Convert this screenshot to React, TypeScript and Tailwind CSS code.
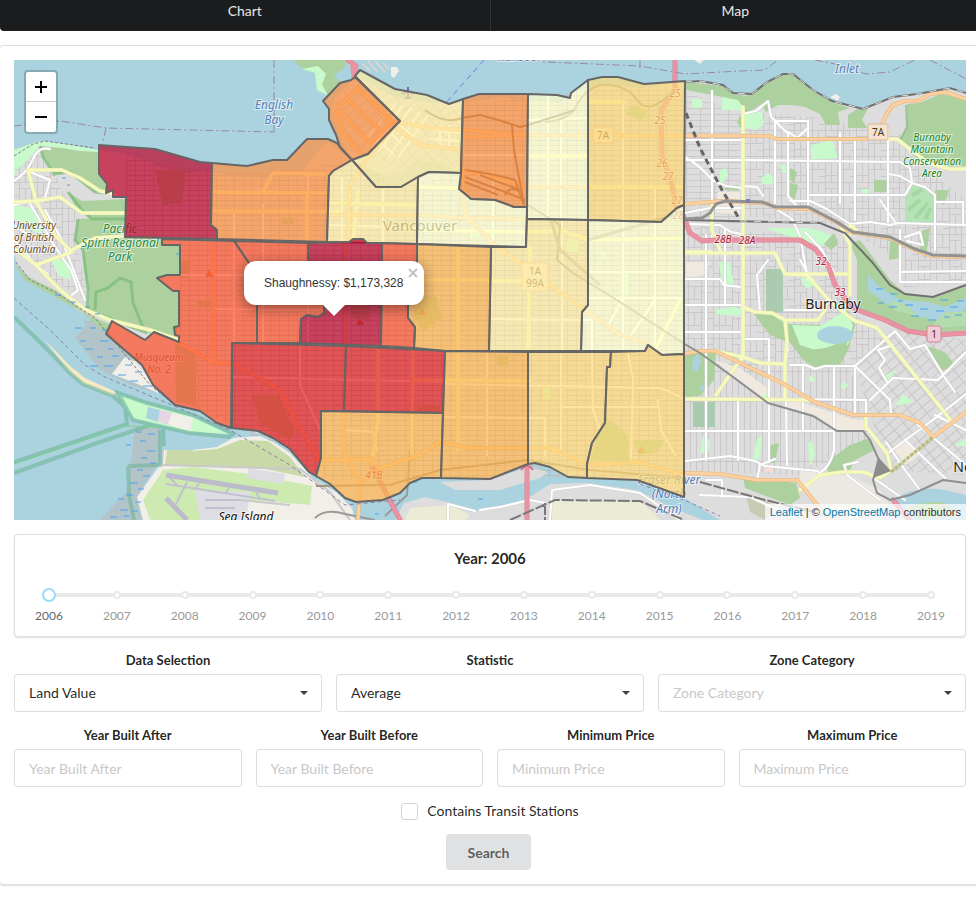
import { useId, useState } from 'react';

type Zone = { name: string; fill: string; points: string };

const ZONES: Zone[] = [
  { name: 'West Point Grey', fill: '#bd0026', points: '99,145 155,149 200,162 212,163 211,225 217,230 217,239 125,237 126,197 113,197 113,190 106,193 107,184 99,174' },
  { name: 'Kitsilano', fill: '#fd8d3c', points: '212,163 247,166 273,160 287,160 307,139 328,139 337,143 340,147 352,160 333,171 329,176 327,242 217,239 217,230 211,225' },
  { name: 'West End', fill: '#fd8d3c', points: '355,77 351,80 340,83 323,101 329,109 329,120 336,135 340,147 352,160 368,154 400,121' },
  { name: 'Downtown', fill: '#ffeda0', points: '355,76 360,70 395,89 427,95 449,104 463,99 461,173 429,172 418,177 401,187 376,187 352,160 368,154 400,121' },
  { name: 'Strathcona', fill: '#fd8d3c', points: '463,99 479,94 528,94 527,207 514,207 495,200 471,199 459,189 461,173' },
  { name: 'Fairview', fill: '#ffeda0', points: '352,160 376,187 401,187 418,177 417,244 327,242 329,176 333,171' },
  { name: 'Mount Pleasant', fill: '#ffffcc', points: '418,177 429,172 461,173 459,189 471,199 495,200 514,207 527,207 526,247 417,244' },
  { name: 'Grandview-Woodland', fill: '#ffffcc', points: '528,94 557,95 570,98 571,93 588,80 588,220 527,219' },
  { name: 'Hastings-Sunrise', fill: '#fed976', points: '588,80 602,77 618,77 644,84 685,81 684,205 677,208 661,222 588,220' },
  { name: 'Renfrew-Collingwood', fill: '#ffffcc', points: '588,220 661,222 677,208 684,205 684,354 662,355 648,345 645,351 581,351 582,312 588,305' },
  { name: 'Kensington-Cedar Cottage', fill: '#ffeda0', points: '527,219 588,220 588,305 582,312 581,351 489,351 491,247 526,247' },
  { name: 'Riley Park', fill: '#feb24c', points: '417,244 491,247 489,351 445,351 414,348 415,327 408,318 408,300 417,262' },
  { name: 'South Cambie', fill: '#fc4e2a', points: '382,243 417,244 417,262 408,300 408,318 415,327 414,348 381,346' },
  { name: 'Arbutus Ridge', fill: '#fc4e2a', points: '234,241 308,243 308,262 324,300 324,313 318,317 307,315 301,319 300,343 257,343 257,275' },
  { name: 'Dunbar-Southlands', fill: '#fc4e2a', points: '162,239 234,241 257,275 257,343 232,343 231,428 217,423 200,411 175,405 153,385 142,365 106,334 112,321 145,340 154,332 179,342 179,336 175,335 174,327 179,326 179,291 173,291 157,278 167,275 180,275 180,245 162,245' },
  { name: 'Kerrisdale', fill: '#e31a1c', points: '232,343 346,346 344,411 321,411 321,458 316,476 309,472 290,449 273,438 258,431 232,428' },
  { name: 'Oakridge', fill: '#e31a1c', points: '346,346 445,351 443,413 344,411' },
  { name: 'Marpole', fill: '#feb24c', points: '321,411 443,413 441,478 422,478 410,483 400,493 383,500 356,502 345,498 330,484 316,476 321,458' },
  { name: 'Sunset', fill: '#feb24c', points: '445,351 528,352 528,464 490,479 441,478' },
  { name: 'Victoria-Fraserview', fill: '#fed976', points: '528,352 611,352 610,367 607,367 605,423 592,443 587,464 587,478 568,477 550,467 535,463 528,464' },
  { name: 'Killarney', fill: '#fed976', points: '611,352 645,351 648,345 662,355 684,354 684,497 637,480 587,478 587,464 592,443 605,423 607,367 610,367' },
  { name: 'Shaughnessy', fill: '#bd0026', points: '308,243 349,242 353,239 363,239 367,243 382,243 381,346 300,343 301,319 307,315 318,317 324,313 324,300 308,262' },
];

const LAND = [
  'M14 153 L25 148 L33 143 L42 142 L65 145 L98 150 L120 153 L150 162 L180 174 L200 171 L212 172 L240 177 L275 177 L300 168 L320 145 L330 143 L340 152 L352 159 L345 148 L338 130 L331 108 L336 96 L351 82 L360 78 L395 97 L425 102 L449 104 L470 102 L500 98 L528 100 L560 103 L575 92 L600 84 L640 88 L685 82 L700 81 L723 85 L733 93 L752 94 L767 82 L783 74 L793 74 L813 90 L832 101 L863 109 L893 97 L917 94 L950 88 L966 93 L966 520 L720 520 L683 497 L637 481 L587 477 L568 476 L550 466 L535 463 L490 478 L422 477 L410 482 L400 492 L383 499 L356 501 L345 497 L330 483 L309 471 L290 448 L273 437 L232 427 L217 422 L200 410 L175 404 L153 384 L130 355 L107 331 L90 317 L77 310 L53 290 L30 278 L18 267 L14 253 Z',
  'M395 520 L404 503 L425 497 L455 504 L470 512 L505 507 L528 498 L550 484 L587 483 L637 490 L670 507 L703 520 Z',
];

const WHITE_ROADS = [
  // UBC and Point Grey
  'M14 181 Q28 172 33 159 T50 149', 'M30 172 L50 180 L45 198 L14 205', 'M28 200 L55 247 L71 270 L78 290 L72 295', 'M14 240 L36 265 L48 274', 'M14 225 L30 236', 'M45 210 L62 240 L85 300',
  // Kitsilano and west side
  'M234 211 L234 343', 'M263 205 L263 343', 'M308 172 L308 343', 'M212 309 L330 310', 'M181 275 L308 275', 'M232 377 L445 382', 'M300 343 L300 385 L320 430',
  // Downtown and Mount Pleasant
  'M330 225 L417 228', 'M342 178 L342 242', 'M383 190 L383 243', 'M418 188 L461 187', 'M493 172 L493 246', 'M548 95 L548 219', 'M561 120 L561 220', 'M528 120 L588 118',
  'M462 155 L528 155', 'M528 156 L588 156', 'M623 100 L623 350', 'M655 188 L655 350', 'M588 272 L684 272', 'M588 298 L684 298', 'M562 220 L562 351',
  'M489 319 L592 320 L592 351', 'M530 250 L530 350', 'M445 384 L660 388 Q672 392 684 399', 'M487 351 L487 455', 'M445 417 L545 418 L545 455', 'M561 353 L561 455', 'M592 352 L593 410 L600 430', 'M628 352 L633 380 L631 460', 'M658 400 L661 430 L675 455',
  'M560 407 L658 407', 'M622 300 L608 326', 'M655 300 L631 335', 'M343 430 L373 432 L377 450',
  // Burnaby north
  'M712 91 L712 240', 'M685 160 L743 160 L900 162', 'M685 140 L743 140', 'M743 114 L756 111 L768 101 L771 117 L785 131 L790 133 L797 138 L808 128 L808 121 L775 121', 'M775 120 L775 203', 'M788 133 L788 196 L796 205',
  'M808 121 L808 205', 'M840 133 L840 203', 'M855 140 L855 220', 'M888 130 L888 222', 'M808 195 L905 195', 'M889 174 L900 176 L912 183 L905 195', 'M912 183 L925 187 L935 195 L935 250',
  'M790 201 L810 201 L825 208 L850 224 L870 222 L890 225 L898 223 L966 225', 'M935 202 L963 202 L963 225', 'M770 205 L792 219 L800 236 L808 280', 'M805 232 L822 250 L835 275',
  'M685 157 Q700 165 712 180 L726 186 L743 188', 'M743 186 L757 187 L763 196', 'M900 162 L910 168 L912 183', 'M685 213 L710 208 L742 208', 'M690 224 L720 225 L731 232 L742 234',
  // Burnaby south
  'M706 235 L706 460', 'M725 228 L725 305', 'M685 279 L720 279 L724 285 L740 287', 'M685 305 L743 305', 'M685 332 L743 332', 'M745 339 L769 339 L769 363', 'M768 260 L757 275 L760 312',
  'M790 365 L806 365 L815 369 L825 366 L856 366', 'M788 348 L785 364', 'M769 364 L769 462', 'M803 365 L803 430', 'M834 366 L834 450 Q830 468 818 474', 'M855 366 L855 416', 'M738 400 L738 460',
  'M685 431 L834 431', 'M685 461 L730 456 L755 461 L765 466 L818 471', 'M786 400 L787 465', 'M785 310 L820 310', 'M784 399 L866 400 L866 414', 'M855 366 L895 331 L910 349 L925 345 L945 378 L955 392', 'M855 366 L890 400 L891 415',
  'M870 400 L893 378 L938 380 L966 352', 'M893 345 L878 350 L885 360 L879 368 L887 382', 'M888 453 L930 422 L966 394', 'M858 462 L844 465 L848 476 L880 500', 'M905 440 L945 478', 'M918 425 L966 465', 'M935 415 L966 430',
  'M868 474 L905 500', 'M886 442 L905 470 L920 490', 'M706 480 L722 480 L722 497', 'M700 495 L750 497 L800 520', 'M757 480 L760 465 L775 459', 'M800 260 L807 272', 'M900 230 L900 280', 'M900 282 L966 282', 'M905 237 L920 232 L923 245 L907 241',
  'M880 200 L895 222', 'M900 272 L966 271',
  // Richmond
  'M550 520 L552 490 L590 485 L640 493 L680 520', 'M480 510 L500 507 L530 500 L545 503', 'M448 520 L448 504 L475 511',
];

const YELLOW_ROADS = [
  'M28 170 L62 170 L80 178 L100 191 L115 194', 'M28 170 L36 201 L60 197 L82 213 L125 213', 'M36 201 L55 235 L72 252 L36 265', 'M14 202 L36 201', 'M72 250 L95 238 L125 236', 'M14 248 L36 265 L60 290 L86 310 L110 320 L150 330 L179 340',
  'M212 211 L340 212', 'M212 192 L325 193', 'M263 192 L273 173 L325 174', 'M307 192 L307 242', 'M330 203 L418 205', 'M358 190 L353 242', 'M418 230 L528 232', 'M527 156 L588 156', 'M588 187 L684 187', 'M588 102 L625 102', 'M458 245 L458 450', 'M415 280 L492 280',
  'M413 346 L412 455', 'M378 345 L378 420 L373 455', 'M415 380 L530 381', 'M530 247 L528 351', 'M585 155 L588 155', 'M489 281 L526 281', 'M528 232 L563 231 L590 240 L684 238', 'M655 350 L680 300', 'M461 188 L418 187',
  'M743 107 L743 357', 'M687 253 L775 253 L785 274 L807 275 L827 298 L853 320 L877 328 L887 340 L952 422', 'M785 274 L850 274', 'M842 228 L850 245 L850 295', 'M743 307 L755 312 L772 313 L785 320 L818 320 L825 310 L827 298', 'M785 320 L787 340 L785 363 L785 399',
  'M715 351 L743 357 L760 363 L783 364', 'M685 399 L812 400', 'M743 357 L733 370 L716 395', 'M866 417 L866 427 L887 453 L891 470 L880 478 L863 472 L843 472 L820 475 L800 490', 'M712 202 L712 230 L720 250', 'M890 139 L897 139 L915 153 L930 164 L950 169 L966 169', 'M685 252 L712 252',
  'M842 230 L852 226 L856 230 L850 234',
];

const ORANGE_ROADS = [
  'M528 135 L770 136 L776 139 L866 139', 'M880 128 L886 115 L893 105 L905 101 L918 101 L930 94 L945 92 L966 99', 'M685 204 L722 201 L765 203 L777 208 L810 209 L840 224 L850 232 L890 238 L920 252 L933 256 L966 257',
  'M683 354 L700 351 L715 351 L740 363 L782 383 L815 402 L853 415 L900 415 L920 423 L933 437 L966 412', 'M683 473 L720 474 L757 480 L797 480 L820 508 L830 520', 'M400 120 L370 155 L350 185 L348 242', 'M385 120 L430 128 L462 130 L528 135', 'M462 137 L528 135',
  'M385 120 L420 145 L461 150', 'M462 170 L528 187 L588 187', 'M327 215 L418 215 L462 218 L526 219', 'M461 150 L465 215 L495 245 L560 292 L620 335 L648 343', 'M344 411 L344 450 L360 485 L358 520', 'M232 363 L280 390 L295 420 L320 460', 'M316 460 L373 459 L373 470 L360 485', 'M373 470 L420 455 L440 442 L470 448 L550 448 L590 465 L640 462 L683 475',
  'M179 343 L215 363 L232 363', 'M213 245 L213 363', 'M345 242 L345 346',
  // West End and downtown avenues
  'M340 105 L358 88 L392 121 L370 143 L338 110', 'M348 100 L382 132', 'M336 112 L342 132 L360 152',
];

// Short downtown blocks running parallel to the harbour
const DOWNTOWN_STREETS = [
  'M395 105 L365 140', 'M403 105 L372 148', 'M411 108 L378 152', 'M420 112 L388 158', 'M428 115 L398 158', 'M385 128 L403 145', 'M392 118 L414 137', 'M376 138 L393 154', 'M432 130 L460 133', 'M430 139 L460 141', 'M440 125 V150', 'M449 125 V152',
];

const MOTORWAYS = ['M683 215 L690 233 L702 241 L715 240 L800 240 L815 249 L828 265 L835 285 L850 305 L860 311 L885 320 L908 331 L935 335 L966 333', 'M675 60 L675 90 L661 110 L662 155 L672 185 L677 210 L684 222', 'M348 60 L356 66 L354 77', 'M373 468 L400 520', 'M527 470 L527 520', 'M893 500 L910 520'];

const PARKS = [
  // Pacific Spirit and the UBC forest
  'M40 146 L62 148 L80 151 L98 152 L99 174 L107 184 L106 193 L95 192 L70 172 L54 174 L43 157 Z',
  'M68 192 L82 201 L125 199 L126 219 L90 219 L76 208 Z',
  'M78 219 L125 217 L125 237 L162 239 L162 245 L180 245 L180 275 L167 275 L157 278 L173 291 L179 291 L179 326 L174 340 L145 332 L88 314 L89 294 L84 270 L83 250 L75 240 Z',
  'M14 262 L28 277 L55 290 L90 316 L112 325 L107 334 L82 312 L52 295 L24 280 Z',
  // Stanley Park
  'M292 60 L348 60 L344 68 L334 75 L340 82 L329 97 L318 90 L316 74 L303 69 Z',
  // Burnaby
  'M686 82 L723 86 L733 94 L746 96 L767 83 L783 75 L793 75 L813 91 L834 103 L850 108 L838 112 L840 125 L826 125 L820 114 L805 107 L791 105 L778 105 L766 112 L761 104 L743 117 L741 129 L737 122 L743 110 L733 110 L728 98 L686 90 Z',
  'M848 128 L848 115 L857 109 L868 108 L862 120 L867 128 Z',
  'M907 104 L920 103 L940 94 L966 99 L966 166 L940 167 L917 157 L900 140 L907 127 Z',
  'M857 260 L850 243 L860 240 L890 280 L905 293 L933 297 L966 285 L966 330 L935 333 L905 328 L857 310 Z',
  'M753 313 L772 314 L785 324 L785 341 L770 335 Z', 'M788 324 L825 325 L848 310 L855 325 L848 350 L840 365 L815 367 L803 360 L788 340 Z',
  'M924 345 L945 352 L955 365 L940 372 Z', 'M827 462 L850 445 L869 438 L875 450 L855 460 L850 470 L828 474 Z', 'M685 352 L716 351 L714 380 L700 396 L685 397 Z', 'M743 477 L796 483 L800 498 L790 505 L745 488 Z', 'M790 183 L798 185 L795 199 L790 197 Z',
  'M823 236 L835 234 L838 244 L831 250 L824 244 Z', 'M874 180 L888 180 L888 192 L874 192 Z', 'M770 445 L779 443 L775 463 L767 463 Z', 'M890 240 L901 240 L900 258 L889 260 Z', 'M935 190 L949 190 L944 205 L935 200 Z',
  'M725 185 L739 185 L739 191 L725 190 Z', 'M790 168 L797 172 L794 183 L790 180 Z', 'M920 232 L930 228 L926 258 L920 250 Z',
  // Vancouver
  'M155 170 L186 170 L182 203 L163 205 Z', 'M252 395 L278 395 L295 430 L290 440 L260 423 Z', 'M418 293 L437 297 L441 318 L424 332 L414 318 Z', 'M604 415 L628 435 L629 460 L590 461 Z', 'M632 440 L664 440 L658 452 L640 455 Z', 'M352 305 L370 303 L368 320 L350 318 Z', 'M630 105 L648 110 L642 120 L626 115 Z', 'M497 356 L508 356 L508 365 L497 365 Z',
  'M418 407 L440 405 L440 412 L418 412 Z', 'M281 218 L295 218 L293 224 L282 224 Z', 'M181 260 h8 v18 h-8 Z M197 300 h14 v7 h-14 Z', 'M175 343 L196 355 L196 405 L176 402 Z',
];

const LIGHT_PARKS = [
  'M692 99 L702 99 L702 108 L692 108 Z', 'M722 97 L738 100 L745 110 L722 110 Z', 'M745 112 L762 112 L764 124 L756 130 L745 128 Z', 'M811 145 L832 140 L838 158 L811 160 Z', 'M761 178 L768 173 L776 178 L774 184 L762 184 Z', 'M780 164 L788 167 L788 174 L782 172 Z', 'M862 189 L869 189 L868 195 L861 195 Z', 'M719 262 L730 262 L734 285 L722 284 Z',
  'M715 310 L733 307 L742 309 L740 316 L716 314 Z', 'M895 405 L903 395 L914 402 L900 405 Z', 'M762 435 L760 458 L752 463 L757 440 Z', 'M703 435 L710 440 L708 455 L700 452 Z', 'M812 440 L815 455 L810 466 L808 445 Z', 'M800 278 L812 276 L818 285 L806 288 Z', 'M765 228 L810 228 L832 235 L822 246 L800 240 Z',
  'M720 170 L726 168 L728 175 L720 188 Z', 'M840 386 L844 382 L848 385 L844 390 Z', 'M758 400 L768 392 L768 400 Z', 'M809 377 L813 375 L815 381 L809 382 Z', 'M14 205 L32 208 L45 225 L40 235 L14 218 Z', 'M50 257 L72 262 L70 280 L58 275 Z', 'M885 375 L896 370 L889 380 Z', 'M955 445 L966 438 L966 447 Z',
  'M470 230 L480 230 L480 237 L470 237 Z', 'M567 238 L578 240 L578 252 L567 252 Z', 'M622 275 L628 273 L628 295 L620 295 Z', 'M543 387 L550 387 L550 399 L543 399 Z', 'M600 250 L606 252 L603 260 Z',
];

const WETLAND_DASHES = [
  'M75 328h7 M90 328h6 M80 341h6 M85 349h8 M100 341h9 M97 357h6 M90 366h8 M108 349h6 M104 366h9 M112 356h7 M125 365h7 M118 375h8 M135 372h7 M130 381h8 M143 386h7 M102 330h6 M95 314h5 M85 307h5 M70 302h6 M55 295h6',
  'M136 432h6 M148 434h7 M140 441h6 M126 445h5 M147 451h8 M141 458h6 M150 463h6 M137 470h6 M143 476h7 M130 483h8 M138 489h6 M126 495h7 M135 502h6 M118 499h6 M120 510h8 M132 511h6 M110 517h7 M124 516h5',
  'M876 289h7 M890 294h7 M878 303h6 M889 307h8 M905 305h8 M920 309h8 M936 311h8 M950 307h8 M911 316h8 M928 320h8 M944 317h6 M957 301h7 M898 301h5 M940 300h8 M955 315h7',
  'M62 178h4 M67 185h3 M176 254h3 M414 482h3 M478 499h5 M375 514h4',
];

const SHORE_LINES = ['M14 317 L43 345 L70 373 L83 384 L113 396 L125 407 L127 424 L14 462', 'M14 473 L100 442 L150 425 L163 427 L164 446', 'M118 393 L147 403 L193 415 L233 434 L229 437 L190 433 L163 427 L133 420 Z', 'M128 466 L160 465 L160 430', 'M128 466 L129 495 L134 520'];

function Roads({ paths, width, color, casing }: { paths: string[]; width: number; color: string; casing: string }) {
  const d = paths.join(' ');
  return (
    <g fill="none" strokeLinejoin="round" strokeLinecap="round">
      <path d={d} stroke={casing} strokeWidth={width + 1} />
      <path d={d} stroke={color} strokeWidth={width} />
    </g>
  );
}

type LabelProps = { x: number; lines: [number, string][]; size: number; color: string; italic?: boolean; halo?: boolean };

function PlaceLabel({ x, lines, size, color, italic = true, halo = true }: LabelProps) {
  return (
    <text
      fontSize={size}
      fill={color}
      textAnchor="middle"
      fontStyle={italic ? 'italic' : 'normal'}
      stroke={halo ? '#ffffff' : 'none'}
      strokeOpacity={0.6}
      strokeWidth={halo ? 2 : 0}
      paintOrder="stroke"
      className="font-['Noto_Sans',sans-serif]"
    >
      {lines.map(([y, text]) => (
        <tspan key={text} x={x} y={y}>{text}</tspan>
      ))}
    </text>
  );
}

function Basemap() {
  return (
    <g>
      <rect x="-400" y="60" width="1800" height="460" fill="#aad3df" />
      {/* tidal flats */}
      <path d="M75 338 L90 320 L108 332 L140 365 L157 385 L165 395 L130 385 L100 370 Z" fill="#b3c4c9" />
      <path d="M82 318 L108 334 L142 366 L130 352 L95 340 Z" fill="#b3c4c9" />
      <path d="M135 428 L160 428 L160 460 L145 483 L137 500 L142 520 L100 520 L128 490 L130 466 Z" fill="#b3c4c9" />
      <path d="M112 374 L125 357 L143 366 L153 385 L160 394 L140 385 Z" fill="#f2efe9" />
      {LAND.map((d) => <path key={d} d={d} fill="#dddddd" />)}
      <path d="M212 164 L247 167 L287 161 L307 140 L328 140 L320 150 L303 170 L270 178 L212 173 Z" fill="#aad3df" />
      {/* False Creek */}
      <path d="M352 160 L368 168 L385 176 L405 170 L418 160 L440 163 L455 172 L430 171 L401 185 L376 186 Z" fill="#c5d5cf" />
      <path d="M14 150 L33 143 L42 141 L65 144 L98 150 L98 153 L40 146 L14 175 Z" fill="#c8facc" />

      {/* local street texture */}
      <path d="M22 165 L40 150 L55 174 L62 192 L80 215 L76 240 L88 300 L60 285 L14 250 L14 170 Z" fill="url(#streets-wide)" />
      <path d="M126 155 L212 172 L300 170 L352 160 L401 187 L461 173 L461 480 L330 480 L232 425 L179 400 L179 245 L126 237 Z" fill="url(#streets-fine)" />
      <path d="M461 105 L588 90 L684 86 L684 478 L440 478 Z" fill="url(#streets-fine)" />
      <path d="M335 100 L360 80 L460 110 L460 168 L400 170 L345 145 Z" fill="url(#streets-diagonal)" />
      <path d="M686 92 L740 112 L740 225 L686 215 Z" fill="url(#streets-flat)" />
      <path d="M740 112 L820 118 L905 135 L915 160 L966 200 L966 260 L900 260 L840 225 L740 215 Z" fill="url(#streets-wide)" />
      <path d="M686 225 L850 240 L850 310 L890 340 L850 366 L686 366 Z" fill="url(#streets-wide)" />
      <path d="M686 366 L850 366 L870 440 L800 475 L686 470 Z" fill="url(#streets-tall)" />
      <path d="M890 330 L966 340 L966 475 L890 470 L875 430 L855 366 Z" fill="url(#streets-diagonal)" />
      <path d="M905 245 L966 262 L966 280 L903 288 Z" fill="url(#streets-wide)" />

      {/* built-up and industrial ground */}
      <path d="M785 402 L800 402 L853 419 L866 420 L866 430 L838 430 L815 415 L785 407 Z M714 360 L740 368 L770 390 L765 400 L730 373 Z M718 192 L740 192 L740 215 L715 212 Z M850 445 L862 440 L866 450 Z M686 262 L710 262 L705 275 L686 278 Z M893 448 L905 440 L920 455 L905 465 Z" fill="#efe9df" />
      <path d="M800 470 L850 476 L880 490 L890 505 L850 520 L820 512 L800 483 Z" fill="#ece9e2" />
      <path d="M765 466 h8 v6 h-8 Z" fill="#f9dccc" />

      {PARKS.map((d) => <path key={d} d={d} fill="#add19e" />)}
      {LIGHT_PARKS.map((d) => <path key={d} d={d} fill="#c8facc" />)}
      <path d="M302 69 L315 73 L317 90 L328 96 L322 84 L326 74 L318 66 Z" fill="#c8facc" />
      <path d="M792 325 L820 326 L845 311 L853 325 L848 345 L815 350 L800 345 Z" fill="#c8facc" />
      <path d="M810 350 L825 348 L848 340 L842 360 L820 366 L809 358 Z" fill="#add19e" />
      <path d="M913 184 L925 187 L934 195 L935 223 L905 223 L905 200 Z" fill="#b5e3b5" />
      <path d="M912 195 L922 190 M908 210 L920 200 M915 218 L928 203 M925 219 L931 208" stroke="#a4d7a4" strokeWidth="4" fill="none" />
      <path d="M766 269 h17 v43 h-17 Z M693 402 h22 v25 h-22 Z" fill="#aacbaf" />
      <ellipse cx="835" cy="335" rx="18" ry="9" fill="#aad3df" />
      <path d="M868 275 L880 287 L900 300 L928 302 L945 307 L966 298 L966 308 L950 322 L925 318 L905 313 L882 301 L868 290 Z" fill="#aad3df" />
      <path d="M890 300 L905 304 L918 316 L895 311 Z M945 312 L966 312 L966 326 L930 328 Z" fill="#b3dcae" />
      <path d="M693 358 l5 -4 3 8 -4 10 -5 -2 Z M700 385 l5 2 -3 6 Z" fill="#aad3df" />
      <path d="M40 146 L43 157 L54 174 L70 172 L95 192 L106 193 M68 192 L82 210 L92 219 L125 219 M78 219 L75 240 L83 250 L88 290 L87 310 L145 332 L133 303 L131 282 L120 278 L108 288 L96 292 L95 310" fill="none" stroke="#76b876" strokeOpacity="0.65" strokeWidth="3" />
      <path d="M906 105 L907 127 L900 140 L917 157 L940 167" fill="none" stroke="#76b876" strokeOpacity="0.6" strokeWidth="2" />

      {/* Sea Island and the airport */}
      <path d="M162 450 L193 450 L217 447 L233 438 L260 436 L275 443 L290 453 L313 478 L337 493 L352 508 L355 520 L143 520 L137 497 L147 483 L162 462 Z" fill="#f2efe9" />
      <path d="M193 451 L217 449 L240 440 L268 441 L290 457 L305 477 L260 468 L193 466 Z" fill="#c9d9a8" />
      <path d="M163 470 L193 467 L258 475 L312 486 L310 505 L250 500 L200 520 L150 520 L143 500 Z" fill="#cdebb0" />
      <path d="M167 450 L193 450 L193 466 L165 466 Z" fill="#c9d9a8" />
      <path d="M248 468 L285 474 L284 484 L248 478 Z M195 490 L250 492 L246 520 L200 520 Z" fill="#dddde3" />
      <path d="M166 475 L278 493 M166 498 L187 520" stroke="#bbbbcc" strokeWidth="5" fill="none" />
      <path d="M166 484 L275 501 M170 478 L178 486 M200 482 L194 490 M230 486 L225 494 M255 490 L260 499 M187 482 L176 504 M205 500 h35 M205 508 h30" stroke="#c1c1cf" strokeWidth="2" fill="none" />
      <path d="M162 465 L300 469 L330 492 L350 520 M240 500 L290 505 M163 450 L162 465" stroke="#c9c9c9" strokeWidth="2" fill="none" />
      <path d="M118 394 L147 404 L190 416 L230 434 L190 432 L163 426 L133 419 Z" fill="#c8facc" />
      <path d="M148 407 L160 410 L158 422 L146 418 Z" fill="#aad3df" />
      <path d="M160 410 L172 413 L169 425 L158 422 Z" fill="#e5d6e6" />
      <path d="M172 413 L193 418 L190 432 L168 424 Z" fill="#f2efe9" />
      <path d="M45 340 L70 366 L85 378 L116 392 L113 396 L83 384 L68 371 Z" fill="#f5e9c6" />
      <path d={SHORE_LINES.join(' ')} fill="none" stroke="#67b38f" strokeOpacity="0.55" strokeWidth="4" />
      <path d="M14 464 L126 426 L160 427" fill="none" stroke="#7ccf8b" strokeWidth="1" />

      {/* Richmond waterfront */}
      <path d="M440 482 L490 480 L528 467 L548 472 L540 478 L500 490 L455 490 Z" fill="#dddddd" />
      <path d="M552 500 L640 500 L660 520 L552 520 Z M410 508 L450 505 L470 515 L465 520 L405 520 Z" fill="#ecebd5" />
      <path d="M893 500 Q915 485 945 490 L966 495 L966 520 L905 520 Z" fill="#aad3df" />
      <path d="M905 510 Q920 500 945 503 L955 515 L920 520 Z" fill="#b5d29c" />
      <path d="M745 492 L775 505 L765 520 L750 512 Z" fill="#c9ccb5" />
      <path d="M315 518 Q325 508 345 514 L375 520 M385 516 L407 495 L410 450" fill="none" stroke="#999999" strokeWidth="2" />

      <path d={DOWNTOWN_STREETS.join(' ')} stroke="#ffffff" strokeWidth="2" fill="none" />
      <Roads paths={WHITE_ROADS} width={2} color="#ffffff" casing="#d4d4d4" />
      <Roads paths={YELLOW_ROADS} width={3} color="#f7fabf" casing="#e3e6ae" />
      <Roads paths={ORANGE_ROADS} width={3} color="#fcd0a0" casing="#e3b273" />
      <Roads paths={MOTORWAYS} width={4} color="#e892a2" casing="#d98095" />
      <path d="M891 472 L933 437" stroke="#b9bb76" strokeWidth="3" strokeDasharray="4 1" />

      {/* railways */}
      <g fill="none">
        <path d="M685 220 L820 223 L845 233 L872 262 L890 285 L905 294 L933 297 L966 285 M685 82 L700 81 L723 85 L733 93 L752 94 L767 82 L783 74 L793 74 L813 90 L832 101 L863 109 L893 97 L917 94 L950 88 L966 93" stroke="#707070" strokeWidth="2" />
        <path d="M685 82 L700 81 L723 85 L733 93 L752 94 L767 82 L783 74 L793 74 L813 90 L832 101 L863 109 L893 97 L917 94 L950 88 L966 93 M740 221 L820 223" stroke="#dddddd" strokeWidth="1" strokeDasharray="7 7" />
        <path d="M686 113 L700 148 L722 190 L740 220" stroke="#666666" strokeWidth="3" strokeDasharray="6 4" />
        <path d="M700 482 L765 500 L815 512 M510 520 L555 500 L640 501 L684 520 M545 503 L545 520" stroke="#777777" strokeWidth="2" strokeDasharray="12 2" />
        <path d="M685 219 L702 218 L710 213 L716 204 L725 201 L762 202 L775 207 L808 207 L835 221 L853 232 L890 237 L915 249 L933 255 L966 256" stroke="#929292" strokeWidth="3" />
        <path d="M528 205 L560 225 L557 260 L573 273 L620 302 L683 343 L700 353 L733 377 L768 403 L813 416 L837 431 L863 431 L870 440 L879 460 L873 480 L877 493 L890 500 L910 495 L943 480 L966 483" stroke="#8f8f8f" strokeWidth="2" />
        <path d="M545 122 Q570 120 577 105 T600 85 Q625 83 637 100 T674 90" stroke="#9a9a8a" strokeWidth="2" />
        <path d="M462 118 L480 115 Q500 120 520 127 L528 125 Q560 115 575 110 M465 170 Q500 175 515 180 L524 205 M465 177 L500 190 L525 200 M465 182 L498 195 M480 175 L520 190 M512 125 L514 150 L524 205 M505 195 Q510 185 520 192 M425 110 Q445 125 462 118" stroke="#85694f" strokeWidth="2" />
        <path d="M316 486 L390 485 L440 470 L528 460 L590 470 L683 478" stroke="#a0907c" strokeWidth="2" />
        <path d="M588 240 L640 225 L684 212 M551 220 L560 250 L600 285" stroke="#a8a89c" strokeWidth="3" />
      </g>
      <path d="M878 457 L891 471 L873 478 Z" fill="#8d8d8d" />
      <path d="M746 199 h4 v4 h-4 Z" fill="#7981b0" />
      <path d="M521 470 q6 -8 12 0" fill="none" stroke="#dc6a89" strokeWidth="2" />

      {/* boundaries, ferries and wetland strokes */}
      <g fill="none">
        <path d="M14 126 L60 121 L106 128 L274 132 M274 60 V132 M106 128 L102 146" stroke="#9c87a6" strokeWidth="1" strokeDasharray="8 3 2 3" />
        <path d="M500 60 L640 66 L685 74 L740 71 L765 70 L778 60 M815 60 L835 64 L866 74 L890 72 L915 60 M930 60 L966 79 M640 60 V70" stroke="#9c87a6" strokeWidth="1" strokeDasharray="8 3 2 3" />
        <path d="M14 298 L50 330 L85 365 L105 377 L160 400 L230 430 L290 465 L345 505 L400 500 M640 484 L684 500 L720 516" stroke="#8f83a2" strokeWidth="1" strokeDasharray="4 3" />
        <path d="M484 60 L445 104" stroke="#7277e0" strokeWidth="1" strokeDasharray="6 4" />
        <path d={WETLAND_DASHES.join(' ')} stroke="#4aa1f3" strokeWidth="1" />
        <path d="M14 156 L33 144 L45 141 L95 148 M16 262 L30 280 L55 292 L95 318 L150 385 L175 405" stroke="#8a7a86" strokeWidth="1" strokeDasharray="3 2" />
      </g>
      <path d="M350 60 l5 6 -1 10 -3 -2 Z" fill="#e892a2" />
      <path d="M362 63 l8 8 M368 61 l10 11 M375 61 l10 11 M383 62 l6 8" stroke="#d9d4cf" strokeWidth="2" />
      <path d="M391 67 h6 l2 4 -5 7 -3 -2 Z M694 60 l6 4 4 -4 Z M830 97 l6 -3 4 3 -2 4 Z" fill="#f2efe9" />
      <path d="M408 87 v11 M402 94 l6 -3 6 3 M405 98 h6" stroke="#8461c4" strokeWidth="2" fill="none" />
      <path d="M209 269 l4 8 h-8 Z M360 318 l4 7 h-8 Z M422 308 l4 7 h-8 Z M641 446 l4 7 h-8 Z" fill="#d08f55" />
    </g>
  );
}

function RoadShield({ x, y, width, height, lines, fill, stroke, color }: { x: number; y: number; width: number; height: number; lines: [number, string][]; fill: string; stroke: string; color: string }) {
  return (
    <g>
      <rect x={x} y={y} width={width} height={height} rx="2" fill={fill} stroke={stroke} />
      <PlaceLabel x={x + width / 2} lines={lines} size={10} color={color} italic={false} halo={false} />
    </g>
  );
}

function MapCanvas() {
  return (
    <svg viewBox="14 60 952 460" preserveAspectRatio="xMidYMid slice" className="block h-[460px] w-full" role="img" aria-label="Land value by Vancouver neighbourhood">
      <defs>
        <pattern id="streets-fine" width="9" height="5" patternUnits="userSpaceOnUse">
          <path d="M0 .5H9M.5 0V5" stroke="#bdbbbb" strokeWidth="1" fill="none" />
        </pattern>
        <pattern id="streets-flat" width="14" height="6" patternUnits="userSpaceOnUse">
          <path d="M0 .5H14M.5 0V6" stroke="#cbc9c9" strokeWidth="1" fill="none" />
        </pattern>
        <pattern id="streets-tall" width="6" height="30" patternUnits="userSpaceOnUse">
          <path d="M0 11.5H6M.5 0V30" stroke="#c9c7c7" strokeWidth="1" fill="none" />
        </pattern>
        <pattern id="streets-wide" width="31" height="26" patternUnits="userSpaceOnUse">
          <path d="M0 .5H31M0 13.5H20M.5 0V26M6.5 0V26M12.5 0V13M19.5 0V26M25.5 6V26M20 6.5H31M20 19.5H31M13 20.5H19" stroke="#cac8c8" strokeWidth="1" fill="none" />
        </pattern>
        <pattern id="streets-diagonal" width="12" height="8" patternUnits="userSpaceOnUse" patternTransform="rotate(-40)">
          <path d="M0 .5H12M.5 0V8" stroke="#c8c6c6" strokeWidth="1" fill="none" />
        </pattern>
      </defs>

      <Basemap />

      <PlaceLabel x={274} lines={[[109, 'English'], [124, 'Bay']]} size={12} color="#5580b8" />
      <PlaceLabel x={520} lines={[[61, 'Harbour']]} size={12} color="#5580b8" />
      <PlaceLabel x={847} lines={[[73, 'Inlet']]} size={12} color="#5580b8" />
      <PlaceLabel x={34} lines={[[229, 'University'], [241, 'of British'], [253, 'Columbia']]} size={10} color="#6a4f17" />
      <PlaceLabel x={120} lines={[[233, 'Pacific'], [247, 'Spirit Regional'], [261, 'Park']]} size={12} color="#278b40" />
      <PlaceLabel x={932} lines={[[141, 'Burnaby'], [153, 'Mountain'], [165, 'Conservation'], [177, 'Area']]} size={10} color="#14871f" />
      <PlaceLabel x={159} lines={[[361, 'Musqueam'], [373, 'No. 2']]} size={10} color="#875e4f" />
      <PlaceLabel x={669} lines={[[484, 'Fraser River'], [498, '(North'], [513, 'Arm)']]} size={12} color="#4b7dbb" />
      <PlaceLabel x={246} lines={[[521, 'Sea Island']]} size={12} color="#111111" />
      <PlaceLabel x={420} lines={[[231, 'Vancouver']]} size={15} color="#333333" italic={false} />
      <PlaceLabel x={833} lines={[[309, 'Burnaby']]} size={14} color="#222222" italic={false} />
      <PlaceLabel x={968} lines={[[472, 'New']]} size={14} color="#222222" italic={false} />
      <PlaceLabel x={723} lines={[[243, '28B']]} size={10} color="#a52034" />
      <PlaceLabel x={747} lines={[[244, '28A']]} size={10} color="#a52034" />
      <PlaceLabel x={821} lines={[[265, '32']]} size={10} color="#a52034" />
      <PlaceLabel x={840} lines={[[296, '33']]} size={10} color="#a52034" />
      <PlaceLabel x={675} lines={[[97, '25']]} size={10} color="#a52034" />
      <PlaceLabel x={660} lines={[[124, '25']]} size={10} color="#a52034" />
      <PlaceLabel x={662} lines={[[167, '26']]} size={10} color="#a52034" />
      <PlaceLabel x={668} lines={[[180, '27']]} size={10} color="#a52034" />
      <PlaceLabel x={677} lines={[[204, '27']]} size={10} color="#a52034" />
      <PlaceLabel x={678} lines={[[219, '28']]} size={10} color="#a52034" />
      <PlaceLabel x={374} lines={[[479, '41B']]} size={10} color="#a52034" />
      <RoadShield x={593} y={127} width={20} height={16} lines={[[139, '7A']]} fill="#f5e3d2" stroke="#e5b386" color="#60411f" />
      <RoadShield x={868} y={124} width={20} height={16} lines={[[136, '7A']]} fill="#f5e3d2" stroke="#dcb798" color="#513515" />
      <RoadShield x={522} y={263} width={26} height={28} lines={[[275, '1A'], [287, '99A']]} fill="#f5e3d2" stroke="#e5b386" color="#60411f" />
      <RoadShield x={927} y={326} width={14} height={16} lines={[[338, '1']]} fill="#edccd3" stroke="#d8849b" color="#67142f" />

      {/* neighbourhood choropleth */}
      <g stroke="#666666" strokeWidth="2" strokeLinejoin="round" fillOpacity="0.7">
        {ZONES.map((zone) => (
          <polygon key={zone.name} points={zone.points} fill={zone.fill} />
        ))}
      </g>
    </svg>
  );
}

function MapView() {
  const [popupOpen, setPopupOpen] = useState(true);
  return (
    <div className="relative overflow-hidden font-['Liberation_Sans',Arial,sans-serif]">
      <MapCanvas />
      <div className="absolute top-[10px] left-[10px] rounded-[4px] border-2 border-black/20 bg-white bg-clip-padding text-black">
        <button type="button" aria-label="Zoom in" className="flex h-[30px] w-[30px] items-center justify-center border-b border-[#cccccc]">
          <svg width="14" height="14" viewBox="0 0 14 14" aria-hidden="true"><path d="M1 7h12M7 1v12" stroke="#000" strokeWidth="2" /></svg>
        </button>
        <button type="button" aria-label="Zoom out" className="flex h-[30px] w-[30px] items-center justify-center">
          <svg width="14" height="14" viewBox="0 0 14 14" aria-hidden="true"><path d="M1 7h12" stroke="#000" strokeWidth="2" /></svg>
        </button>
      </div>
      {popupOpen && (
        <div className="absolute top-[201px] left-[calc(50%-246px)] w-[180px]">
          <div className="relative z-10 rounded-[12px] bg-white px-5 py-[14px] text-[12px] leading-4 whitespace-nowrap text-[#333333] shadow-[0_3px_14px_rgba(0,0,0,0.4)]">
            Shaughnessy: $1,173,328
            <button type="button" aria-label="Close popup" onClick={() => setPopupOpen(false)} className="absolute top-1 right-[3px] flex h-4 w-4 items-center justify-center">
              <svg width="10" height="10" viewBox="0 0 10 10" aria-hidden="true"><path d="M1 1l8 8M9 1l-8 8" stroke="#c3c3c3" strokeWidth="2" /></svg>
            </button>
          </div>
          <svg width="22" height="11" viewBox="0 0 22 11" className="relative z-20 mx-auto block" aria-hidden="true"><path d="M0 0h22L11 11Z" fill="#fff" /></svg>
        </div>
      )}
      <div className="absolute right-0 bottom-0 bg-white/70 px-[5px] text-[11px] leading-4 text-[#333333]">
        <a href="#leaflet" className="text-[#0078a8]">Leaflet</a> | © <a href="#osm" className="text-[#0078a8]">OpenStreetMap</a> contributors
      </div>
    </div>
  );
}

const YEARS = [2006, 2007, 2008, 2009, 2010, 2011, 2012, 2013, 2014, 2015, 2016, 2017, 2018, 2019];

function YearSlider() {
  const [year, setYear] = useState(2006);
  return (
    <section className="rounded-[4px] border border-[#22242626] px-[14px] pt-[13px] pb-[11px] shadow-[0_1px_2px_0_rgba(34,36,38,0.15)]">
      <label htmlFor="year" className="block text-center text-[15px] leading-5 font-bold">Year: {year}</label>
      <div className="relative mx-5 mt-5 h-[14px]">
        <div className="flex h-full items-center">
          <div className="h-1 w-full bg-[#e9e9e9]" />
        </div>
        <div className="absolute inset-y-0 -right-1 -left-1 flex items-center justify-between">
          {YEARS.map((y) => (
            <span key={y} className="h-2 w-2 rounded-full border-2 border-[#e9e9e9] bg-white" />
          ))}
        </div>
        <input
          id="year"
          type="range"
          min={2006}
          max={2019}
          value={year}
          onChange={(e) => setYear(Number(e.target.value))}
          className="absolute inset-y-0 -left-[7px] h-[14px] w-[calc(100%+14px)] cursor-pointer appearance-none bg-transparent [&::-webkit-slider-thumb]:h-[14px] [&::-webkit-slider-thumb]:w-[14px] [&::-webkit-slider-thumb]:appearance-none [&::-webkit-slider-thumb]:rounded-full [&::-webkit-slider-thumb]:border-2 [&::-webkit-slider-thumb]:border-solid [&::-webkit-slider-thumb]:border-[#96dbfa] [&::-webkit-slider-thumb]:bg-white"
        />
      </div>
      <div className="mt-[5px] flex justify-between text-[12px] leading-[18px] text-[#999999]">
        {YEARS.map((y) => (
          <span key={y} className={y === year ? 'w-10 text-center text-[#666666]' : 'w-10 text-center'}>{y}</span>
        ))}
      </div>
    </section>
  );
}

function SelectField({ label, options, placeholder }: { label: string; options: string[]; placeholder?: string }) {
  const id = useId();
  const [value, setValue] = useState(placeholder ? '' : options[0]);
  return (
    <div className="min-w-0 flex-1">
      <label htmlFor={id} className="mb-[5px] block text-center text-[13px] leading-[18px] font-bold">{label}</label>
      <div className="relative">
        <select
          id={id}
          value={value}
          onChange={(e) => setValue(e.target.value)}
          className={
            value === ''
              ? 'block h-[38px] w-full appearance-none rounded-[4px] border border-[#22242626] bg-white px-[14px] pb-0.5 text-[14px] text-[#c8c8c8]'
              : 'block h-[38px] w-full appearance-none rounded-[4px] border border-[#22242626] bg-white px-[14px] pb-0.5 text-[14px] text-black/87'
          }
        >
          {placeholder && <option value="">{placeholder}</option>}
          {options.map((o) => <option key={o}>{o}</option>)}
        </select>
        <svg width="8" height="4" viewBox="0 0 8 4" className="pointer-events-none absolute top-[17px] right-[14px]" aria-hidden="true"><path d="M0 0h8L4 4Z" fill="#404040" /></svg>
      </div>
    </div>
  );
}

function TextField({ label }: { label: string }) {
  const id = useId();
  return (
    <div className="min-w-0 flex-1">
      <label htmlFor={id} className="mb-[5px] block text-center text-[13px] leading-[18px] font-bold">{label}</label>
      <input id={id} type="text" placeholder={label} className="block h-[38px] w-full rounded-[4px] border border-[#22242626] bg-white px-[14px] pt-px text-[14px] placeholder:text-[#c8c8c8]" />
    </div>
  );
}

export default function App() {
  return (
    <div className="overflow-hidden bg-white pb-6 font-[Lato,sans-serif] text-[14px] text-black/87">
      <nav className="-mr-1 flex h-[31px] rounded-b-[4px] bg-[#1b1c1d] text-[14px] leading-[22px] text-white/90">
        <a href="#chart" className="flex-1 border-r border-white/10 text-center">Chart</a>
        <a href="#map" className="flex-1 text-center">Map</a>
      </nav>
      <main className="mt-[14px] -mr-[5px] -ml-px rounded-[4px] border border-[#22242626] p-[14px] shadow-[0_1px_2px_0_rgba(34,36,38,0.15)]">
        <MapView />
        <div className="mt-[14px]">
          <YearSlider />
        </div>
        <form onSubmit={(e) => e.preventDefault()}>
          <div className="mt-[14px] flex gap-[14px]">
            <SelectField label="Data Selection" options={['Land Value', 'Property Tax']} />
            <SelectField label="Statistic" options={['Average', 'Median']} />
            <SelectField label="Zone Category" placeholder="Zone Category" options={['Residential', 'Commercial']} />
          </div>
          <div className="mt-[14px] flex gap-[14px]">
            <TextField label="Year Built After" />
            <TextField label="Year Built Before" />
            <TextField label="Minimum Price" />
            <TextField label="Maximum Price" />
          </div>
          <div className="mt-[14px] flex justify-center">
            <label className="flex items-center gap-[9px] leading-5">
              <input type="checkbox" className="h-[17px] w-[17px] appearance-none rounded-[3px] border border-[#d4d4d5] bg-white checked:bg-[#96dbfa]" />
              Contains Transit Stations
            </label>
          </div>
          <div className="mt-[13px] flex justify-center pr-[3px]">
            <button type="submit" className="h-9 w-[85px] rounded-[4px] bg-[#e0e1e2] text-[14px] font-bold text-black/60">Search</button>
          </div>
        </form>
      </main>
    </div>
  );
}
